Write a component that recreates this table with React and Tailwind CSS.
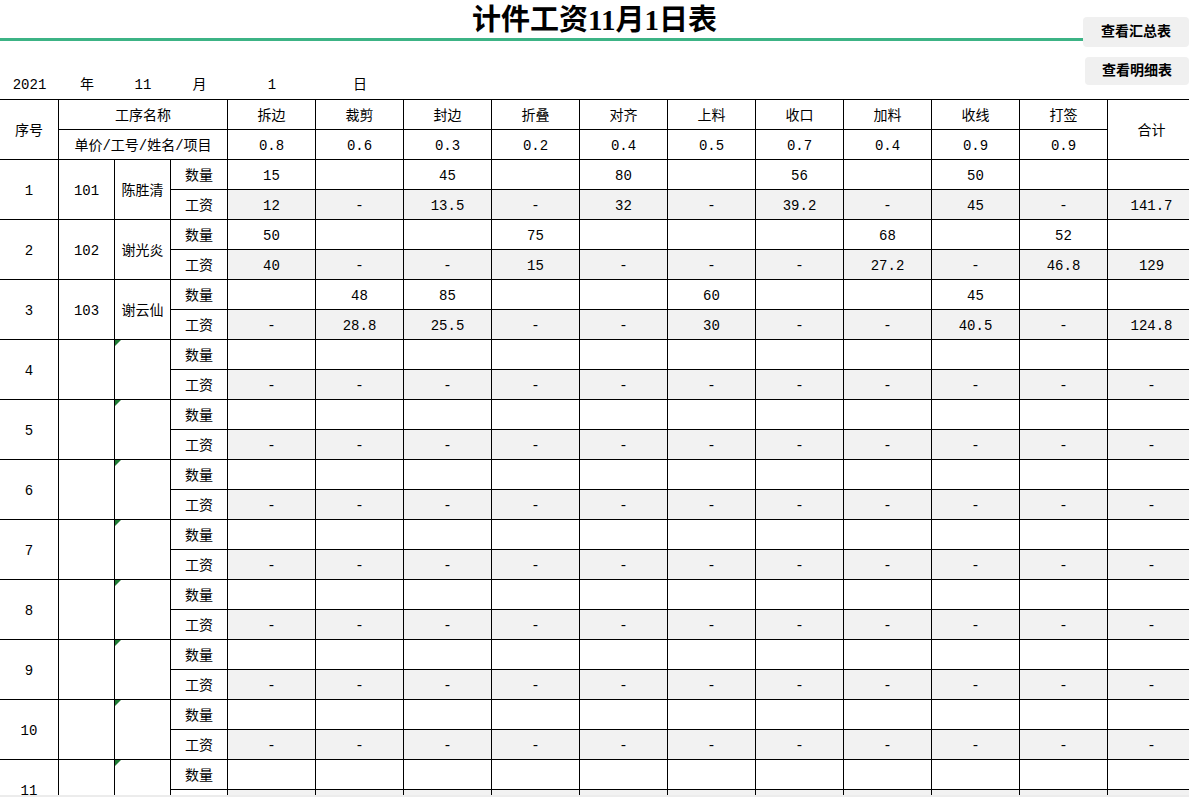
const processes = [
  { name: "拆边", price: 0.8 },
  { name: "裁剪", price: 0.6 },
  { name: "封边", price: 0.3 },
  { name: "折叠", price: 0.2 },
  { name: "对齐", price: 0.4 },
  { name: "上料", price: 0.5 },
  { name: "收口", price: 0.7 },
  { name: "加料", price: 0.4 },
  { name: "收线", price: 0.9 },
  { name: "打签", price: 0.9 },
];

const workers = [
  { id: "101", name: "陈胜清", qty: [15, null, 45, null, 80, null, 56, null, 50, null] },
  { id: "102", name: "谢光炎", qty: [50, null, null, 75, null, null, null, 68, null, 52] },
  { id: "103", name: "谢云仙", qty: [null, 48, 85, null, null, 60, null, null, 45, null] },
];

const rows = Array.from({ length: 11 }, (_, i) => workers[i] || { id: "", name: "", qty: Array(10).fill(null), empty: true });

const cell = "flex items-center justify-center pt-[3px] border-r border-b border-black";
const font = { fontFamily: '"Liberation Mono", "Noto Sans CJK SC", monospace' };

function round1(n) {
  return Math.round(n * 10) / 10;
}

export default function App() {
  return (
    <div className="relative w-[1189px] h-[797px] overflow-hidden bg-white text-black">
      <div className="flex">
        <div className="flex-1">
          <div
            className="h-[38px] pl-[106px] pt-[3px] flex items-center justify-center text-[29px] font-bold leading-none"
            style={{ fontFamily: '"Liberation Serif", "Noto Sans CJK SC", serif' }}
          >
            计件工资11月1日表
          </div>
          <div className="h-[3px] bg-[#3cb385]" />
          <div className="h-[31px]" />
          <div className="grid grid-cols-[59px_56px_56px_57px_88px_88px] h-[27px] text-[14px]" style={font}>
            <div className="flex items-center justify-center">2021</div>
            <div className="flex items-center justify-center">年</div>
            <div className="flex items-center justify-center">11</div>
            <div className="flex items-center justify-center">月</div>
            <div className="flex items-center justify-center">1</div>
            <div className="flex items-center justify-center">日</div>
          </div>
        </div>
        <div className="w-[106px] pt-[17px] flex flex-col items-end text-[14px] font-bold" style={{ fontFamily: '"Noto Sans CJK SC", sans-serif' }}>
          <div className="w-[106px] h-[30px] pb-[3px] rounded bg-[#f0f0f0] flex items-center justify-center">查看汇总表</div>
          <div className="mt-[10px] w-[104px] h-[28px] pb-[3px] rounded bg-[#f0f0f0] flex items-center justify-center">查看明细表</div>
        </div>
      </div>

      <div
        className="grid grid-cols-[59px_56px_56px_57px_repeat(11,88px)] auto-rows-[30px] w-[1196px] border-t border-black text-[14px]"
        style={font}
      >
        <div className={`${cell} row-span-2`}>序号</div>
        <div className={`${cell} col-span-3`}>工序名称</div>
        {processes.map((p) => (
          <div key={p.name} className={cell}>{p.name}</div>
        ))}
        <div className={`${cell} row-span-2`}>合计</div>
        <div className={`${cell} col-span-3`}>单价/工号/姓名/项目</div>
        {processes.map((p) => (
          <div key={p.name} className={cell}>{p.price}</div>
        ))}

        {rows.map((r, i) => {
          const wages = r.qty.map((q, j) => (q == null ? null : round1(q * processes[j].price)));
          const total = wages.some((w) => w != null) ? round1(wages.reduce((s, w) => s + (w || 0), 0)) : "-";
          return [
            <div key={`n${i}`} className={`${cell} row-span-2`}>{i + 1}</div>,
            <div key={`i${i}`} className={`${cell} row-span-2`}>{r.id}</div>,
            <div key={`m${i}`} className={`${cell} row-span-2 relative`}>
              {r.empty && (
                <svg className="absolute left-0 top-0" width="6" height="6" viewBox="0 0 6 6">
                  <polygon points="0,0 6,0 0,6" fill="#1e7b34" />
                </svg>
              )}
              {r.name}
            </div>,
            <div key={`ql${i}`} className={cell}>数量</div>,
            ...r.qty.map((q, j) => (
              <div key={`q${i}-${j}`} className={cell}>{q ?? ""}</div>
            )),
            <div key={`qt${i}`} className={cell} />,
            <div key={`wl${i}`} className={cell}>工资</div>,
            ...wages.map((w, j) => (
              <div key={`w${i}-${j}`} className={`${cell} bg-[#f2f2f2]`}>{w ?? "-"}</div>
            )),
            <div key={`wt${i}`} className={`${cell} bg-[#f2f2f2]`}>{total}</div>,
          ];
        })}
      </div>

      <div className="absolute left-0 right-0 bottom-0 h-[2px] bg-[#ececec]" />
    </div>
  );
}
